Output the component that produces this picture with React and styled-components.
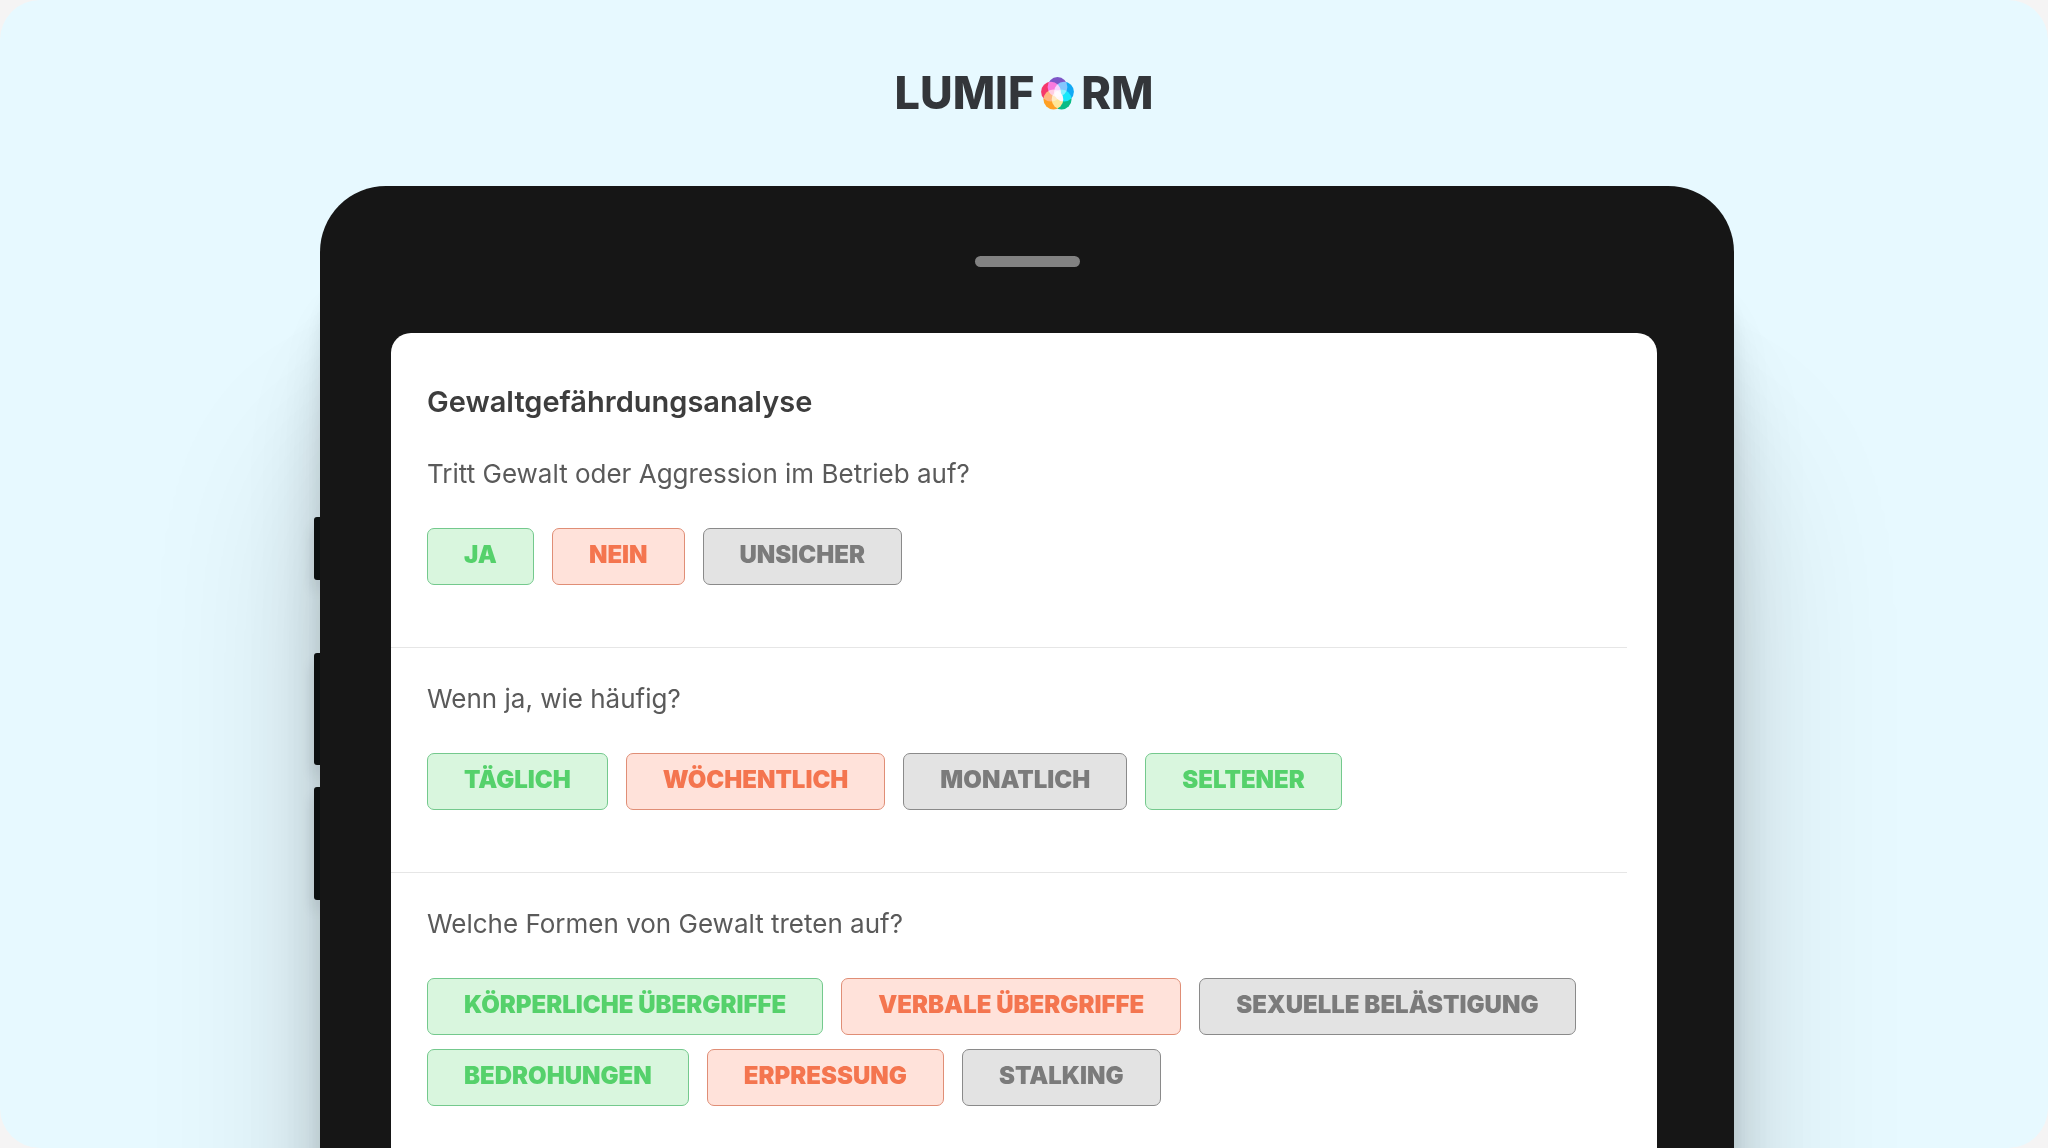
import React, { useState } from 'react';

// Style
import styled, { createGlobalStyle } from 'styled-components';

const tones = {
  green: { text: '#55d16b', fill: '#d9f6de', line: '#74c98d' },
  orange: { text: '#f4754f', fill: '#ffe2da', line: '#e08e76' },
  gray: { text: '#7b7b7b', fill: '#e3e3e3', line: '#8a8a8a' },
};

const questions = [
  {
    id: 'auftreten',
    text: 'Tritt Gewalt oder Aggression im Betrieb auf?',
    answers: [
      { label: 'JA', tone: 'green' },
      { label: 'NEIN', tone: 'orange' },
      { label: 'UNSICHER', tone: 'gray' },
    ],
  },
  {
    id: 'haeufigkeit',
    text: 'Wenn ja, wie häufig?',
    answers: [
      { label: 'TÄGLICH', tone: 'green' },
      { label: 'WÖCHENTLICH', tone: 'orange' },
      { label: 'MONATLICH', tone: 'gray' },
      { label: 'SELTENER', tone: 'green' },
    ],
  },
  {
    id: 'formen',
    text: 'Welche Formen von Gewalt treten auf?',
    answers: [
      { label: 'KÖRPERLICHE ÜBERGRIFFE', tone: 'green' },
      { label: 'VERBALE ÜBERGRIFFE', tone: 'orange' },
      { label: 'SEXUELLE BELÄSTIGUNG', tone: 'gray' },
      { label: 'BEDROHUNGEN', tone: 'green' },
      { label: 'ERPRESSUNG', tone: 'orange' },
      { label: 'STALKING', tone: 'gray' },
    ],
  },
];

const Flower = () => (
  <FlowerSvg viewBox='0 0 32 32' aria-hidden='true'>
    <g>
      <circle cx='16' cy='9.7' r='9.6' fill='#7d55c7' />
      <circle cx='9.7' cy='14.2' r='9.6' fill='#f5386b' />
      <circle cx='22.3' cy='14.2' r='9.6' fill='#10a9f5' />
      <circle cx='20' cy='21.8' r='9.6' fill='#08bb86' />
      <circle cx='12' cy='21.8' r='9.6' fill='#ffa023' />
    </g>
  </FlowerSvg>
);

const Question = ({ id, text, answers }) => {
  const [picked, setPicked] = useState(null);

  return (
    <Section role='group' aria-labelledby={id}>
      <QuestionText id={id}>{text}</QuestionText>
      <Answers>
        {answers.map(({ label, tone }) => (
          <Answer
            key={label}
            type='button'
            $tone={tone}
            aria-pressed={picked === label}
            onClick={() => setPicked(label)}
          >
            {label}
          </Answer>
        ))}
      </Answers>
    </Section>
  );
};

const App = () => (
  <>
    <GlobalStyle />
    <Page>
      <Header>
        <Logo aria-label='Lumiform'>
          <span>LUMIF</span>
          <Flower />
          <span>RM</span>
        </Logo>
      </Header>
      <Tablet>
        <SideKeys>
          <SideKey $height={63} $before={331} />
          <SideKey $height={112} $before={73} />
          <SideKey $height={113} $before={22} />
        </SideKeys>
        <Frame>
          <Speaker />
          <Screen>
            <Title>Gewaltgefährdungsanalyse</Title>
            {questions.map((question) => (
              <Question key={question.id} {...question} />
            ))}
          </Screen>
        </Frame>
      </Tablet>
    </Page>
  </>
);

const GlobalStyle = createGlobalStyle`
  * {
    box-sizing: border-box;
  }

  body {
    margin: 0;
    background: #f5f4f4;
    font-family: Inter, 'Liberation Sans', sans-serif;
  }
`;

const Page = styled.div`
  height: 100vh;
  display: flex;
  flex-direction: column;
  align-items: center;
  overflow: hidden;
  background: #e7f9ff;
  border-radius: 40px;
`;

const Header = styled.header`
  height: 186px;
  flex-shrink: 0;
  display: flex;
  align-items: center;
`;

const Logo = styled.div`
  display: flex;
  align-items: center;
  gap: 7px;
  color: #33363a;
  font-size: 45px;
  font-weight: 800;
  line-height: 48px;
`;

const FlowerSvg = styled.svg`
  width: 33px;
  height: 33px;

  g {
    isolation: isolate;
  }
  circle {
    mix-blend-mode: screen;
  }
`;

const Tablet = styled.main`
  width: 70%;
  max-width: 1420px;
  flex: 1 0 auto;
  display: flex;
`;

const SideKeys = styled.div`
  width: 6px;
  display: flex;
  flex-direction: column;
`;

const SideKey = styled.div`
  height: ${({ $height }) => $height}px;
  margin-top: ${({ $before }) => $before}px;
  background: #0f1414;
  border-radius: 3px 0 0 3px;
  box-shadow: 0 10px 14px rgba(0, 0, 0, 0.14);
`;

const Frame = styled.div`
  flex: 1;
  min-width: 0;
  display: flex;
  flex-direction: column;
  padding-top: 70px;
  background: #161616;
  border-radius: 66px 66px 0 0;
  box-shadow:
    0 270px 180px rgba(0, 0, 0, 0.14),
    0 170px 80px rgba(0, 0, 0, 0.11),
    0 110px 40px rgba(0, 0, 0, 0.08),
    0 80px 16px rgba(0, 0, 0, 0.05);
`;

const Speaker = styled.div`
  width: 105px;
  height: 11px;
  align-self: center;
  background: #828282;
  border-radius: 6px;
`;

const Screen = styled.div`
  flex: 1;
  margin: 66px 77px 0 71px;
  padding: 53px 30px 44px 0;
  background: #fff;
  border-radius: 20px 20px 0 0;
`;

const Title = styled.h1`
  margin: 0 0 40px;
  padding-left: 36px;
  color: #3d3d3d;
  font-size: 29px;
  font-weight: 600;
  line-height: 32px;
`;

const Section = styled.section`
  padding: 0 0 62px 36px;

  & + & {
    padding-top: 35px;
    border-top: 1px solid #e6e6e6;
  }
`;

const QuestionText = styled.h2`
  margin: 0 0 38px;
  color: #5a5a5a;
  font-size: 26px;
  font-weight: 400;
  line-height: 32px;
`;

const Answers = styled.div`
  display: flex;
  flex-wrap: wrap;
  gap: 14px 18px;
`;

const Answer = styled.button`
  height: 57px;
  padding: 0 36px 5px;
  color: ${({ $tone }) => tones[$tone].text};
  background: ${({ $tone }) => tones[$tone].fill};
  border: 1px solid ${({ $tone }) => tones[$tone].line};
  border-radius: 7px;
  font-family: Inter, 'Liberation Sans', sans-serif;
  font-size: 24px;
  font-weight: 900;
  cursor: pointer;
`;

export default App;
